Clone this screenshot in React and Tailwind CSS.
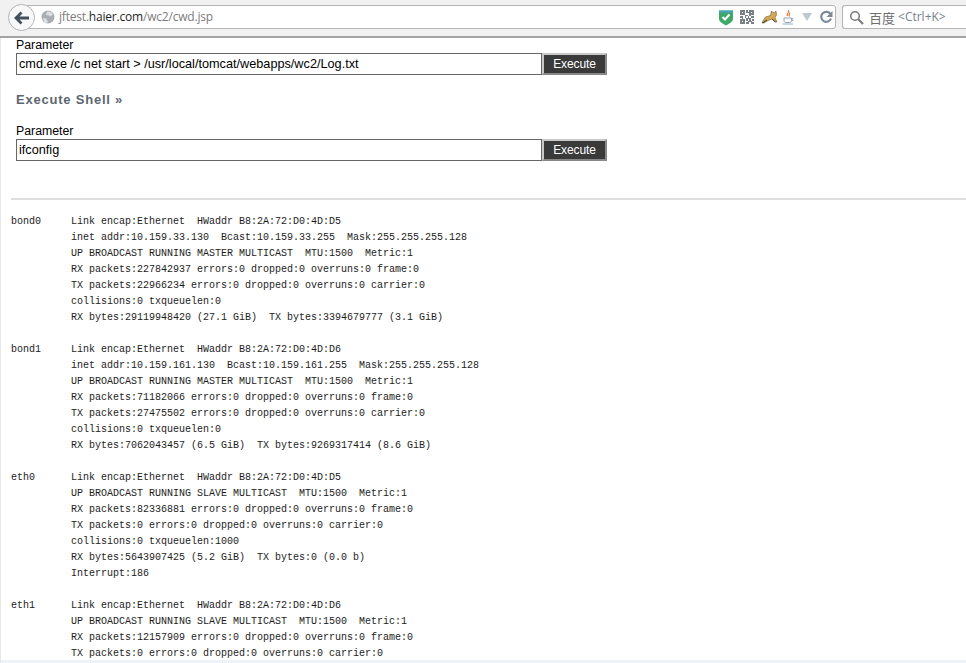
const output = `bond0     Link encap:Ethernet  HWaddr B8:2A:72:D0:4D:D5  
          inet addr:10.159.33.130  Bcast:10.159.33.255  Mask:255.255.255.128
          UP BROADCAST RUNNING MASTER MULTICAST  MTU:1500  Metric:1
          RX packets:227842937 errors:0 dropped:0 overruns:0 frame:0
          TX packets:22966234 errors:0 dropped:0 overruns:0 carrier:0
          collisions:0 txqueuelen:0 
          RX bytes:29119948420 (27.1 GiB)  TX bytes:3394679777 (3.1 GiB)

bond1     Link encap:Ethernet  HWaddr B8:2A:72:D0:4D:D6  
          inet addr:10.159.161.130  Bcast:10.159.161.255  Mask:255.255.255.128
          UP BROADCAST RUNNING MASTER MULTICAST  MTU:1500  Metric:1
          RX packets:71182066 errors:0 dropped:0 overruns:0 frame:0
          TX packets:27475502 errors:0 dropped:0 overruns:0 carrier:0
          collisions:0 txqueuelen:0 
          RX bytes:7062043457 (6.5 GiB)  TX bytes:9269317414 (8.6 GiB)

eth0      Link encap:Ethernet  HWaddr B8:2A:72:D0:4D:D5  
          UP BROADCAST RUNNING SLAVE MULTICAST  MTU:1500  Metric:1
          RX packets:82336881 errors:0 dropped:0 overruns:0 frame:0
          TX packets:0 errors:0 dropped:0 overruns:0 carrier:0
          collisions:0 txqueuelen:1000 
          RX bytes:5643907425 (5.2 GiB)  TX bytes:0 (0.0 b)
          Interrupt:186 

eth1      Link encap:Ethernet  HWaddr B8:2A:72:D0:4D:D6  
          UP BROADCAST RUNNING SLAVE MULTICAST  MTU:1500  Metric:1
          RX packets:12157909 errors:0 dropped:0 overruns:0 frame:0
          TX packets:0 errors:0 dropped:0 overruns:0 carrier:0`;

function Shield() {
  return (
    <svg width="16" height="17" viewBox="0 0 16 17" className="shrink-0">
      <path d="M1 1.5h14v8.5c0 2.5-3.5 4.8-7 6.5-3.500-1.700-7-4-7-6.500z" fill="#3fa866" />
      <path d="M1 1.500h14v2H1z" fill="#4aa3c4" />
      <path d="M4.500 8l2.500 2.500 4.500-5" fill="none" stroke="#fff" strokeWidth="2" />
    </svg>
  );
}

function Qr() {
  const cells = ["111010111", "101011101", "111000111", "000110100", "110101011", "010011100", "111010101", "101001110", "111011011"];
  return (
    <svg width="14" height="14" viewBox="0 0 9 9" className="shrink-0" shapeRendering="crispEdges">
      {cells.map((row, y) =>
        row.split("").map((c, x) => (c === "1" ? <rect key={`${x}-${y}`} x={x} y={y} width="1" height="1" fill="#7b8087" /> : null))
      )}
    </svg>
  );
}

function Cat() {
  return (
    <svg width="17" height="14" viewBox="0 0 17 14" className="shrink-0">
      <path d="M1 12.500 4.500 7 9.500 5.500 10.500 1l1.500 1.500h1.500L15 1l.5 4-1.500 2.500 2 4.500-2.500-.5L11 9 7 10.500 3 13z" fill="#d4a855" stroke="#6a5a35" strokeWidth=".6" />
      <path d="M1.500 13 6 10M11 9l3.500 3" stroke="#3c3423" strokeWidth="1" />
    </svg>
  );
}

function Java() {
  return (
    <svg width="12" height="17" viewBox="0 0 12 17" className="shrink-0">
      <path d="M6.500 1C8 3 4 4.500 5.500 7M8 3.500C7 5 6.500 6 7.500 7.500" fill="none" stroke="#d9703c" strokeWidth="1.100" />
      <path d="M2 9h7.500v2.500c0 1.500-1 2-2 2h-3.500c-1 0-2-.5-2-2z" fill="none" stroke="#8ba4b8" strokeWidth="1" />
      <path d="M9.500 9.500h1.500v2h-1.500" fill="none" stroke="#8ba4b8" strokeWidth=".8" />
      <path d="M.5 15h10.500" stroke="#a9bccb" strokeWidth="1.200" />
    </svg>
  );
}

function Reload() {
  return (
    <svg width="14" height="14" viewBox="0 0 14 14" className="shrink-0">
      <path d="M11.500 4.200A5 5 0 1 0 12 8.500" fill="none" stroke="#7b8a99" strokeWidth="2.200" />
      <path d="M13.500 1v6h-6z" fill="#7b8a99" />
    </svg>
  );
}

function Search() {
  return (
    <svg width="15" height="15" viewBox="0 0 15 15" className="shrink-0">
      <circle cx="6" cy="6" r="4.300" fill="none" stroke="#7c7c7c" strokeWidth="1.600" />
      <path d="M9.300 9.300 14 14" stroke="#7c7c7c" strokeWidth="2.200" />
    </svg>
  );
}

function Globe() {
  return (
    <svg width="14" height="14" viewBox="0 0 14 14" className="shrink-0">
      <circle cx="7" cy="7" r="6.500" fill="#a8adb2" />
      <path d="M6 1.500c2-.5 5 .5 6 3l-3 2-2-1.500-2 .5zM2 8l3 .5 2 3-1.500 2C3.500 13 2.500 10.500 2 8z" fill="#dcdfe2" />
    </svg>
  );
}

function Back() {
  return (
    <svg width="16" height="14" viewBox="0 0 16 14">
      <path d="M7.500 1.500 2 7l5.500 5.500M2.500 7H15" fill="none" stroke="#41515f" strokeWidth="2.800" />
    </svg>
  );
}

function Form({ value }) {
  return (
    <div className="flex items-stretch h-[22px] w-[591px]">
      <div className="w-[526px] border border-[#666] bg-white pl-[2px] pt-[1px] flex items-center text-[12.700px] text-black whitespace-pre">{value}</div>
      <button className="w-[65px] bg-[#3a3a3a] border-2 border-t-[#c8c8c8] border-l-[#c8c8c8] border-r-[#888] border-b-[#888] text-white text-[12px] tracking-[-0.1px] leading-none">Execute</button>
    </div>
  );
}

export default function App() {
  return (
    <div className="w-[966px] h-[663px] overflow-hidden bg-white flex flex-col font-['Liberation_Sans',Arial,sans-serif]">
      <header className="h-[38px] shrink-0 bg-[#f1f1f1] border-b-2 border-[#a3a3a3] flex items-start pt-[5px] relative">
        <div className="ml-[26px] w-[810px] h-[24px] bg-white border border-[#b4b4b4] rounded-r-[3px] flex items-center">
          <div className="ml-[14px]"><Globe /></div>
          <span className="ml-[4px] text-[12px] text-[#7d7d7d] font-['Open_Sans','Liberation_Sans',sans-serif] tracking-[-0.2px]">
            jftest.<span className="text-[#1f1f1f]">haier.com</span>/wc2/cwd.jsp
          </span>
          <div className="ml-auto flex items-center mr-[2px]">
            <Shield />
            <div className="ml-[6px]"><Qr /></div>
            <div className="ml-[7px]"><Cat /></div>
            <div className="ml-[4px]"><Java /></div>
            <div className="ml-[8px] w-0 h-0 border-l-[5px] border-r-[5px] border-t-[8px] border-l-transparent border-r-transparent border-t-[#c1c8ce]" />
            <div className="ml-[7px]"><Reload /></div>
          </div>
        </div>
        <div className="ml-[6px] flex-1 h-[24px] bg-white border border-[#b4b4b4] border-r-0 rounded-l-[3px] flex items-center pl-[6px]">
          <Search />
          <span className="ml-[5px] text-[13px] text-[#6e6e6e] font-['Noto_Sans_CJK_SC',sans-serif] leading-none">百度</span>
          <span className="ml-[3px] text-[12px] text-[#77808a] font-['Open_Sans',sans-serif] leading-none">{"<Ctrl+K>"}</span>
        </div>
        <div className="absolute left-[8px] top-[4px] w-[27px] h-[27px] rounded-full bg-[#f8f8f8] border border-[#b0b4b8] flex items-center justify-center">
          <Back />
        </div>
      </header>

      <main className="flex-1 min-h-0 border-l border-[#e8e8e8] relative">
        <div className="pl-[15px]">
          <div className="mb-px text-[12.300px] leading-[14px] text-black">Parameter</div>
          <Form value="cmd.exe /c net start > /usr/local/tomcat/webapps/wc2/Log.txt" />
          <h2 className="mt-[17px] h-[16px] text-[13px] leading-[16px] font-bold text-[#5d6670] tracking-[0.78px]">Execute Shell »</h2>
          <div className="mt-[16px] mb-px text-[12.300px] leading-[14px] text-black">Parameter</div>
          <Form value="ifconfig" />
        </div>
        <div className="mt-[37px] ml-[10px] h-[2px] bg-[#dfdfdf]" />
        <pre className="mt-[14px] ml-[10px] text-[10px] leading-[16px] text-[#1c1c1c] font-['Liberation_Mono',monospace]">{output}</pre>
        <div className="absolute left-0 right-0 bottom-0 h-[3px] bg-[#edf3f8]" />
      </main>
    </div>
  );
}
